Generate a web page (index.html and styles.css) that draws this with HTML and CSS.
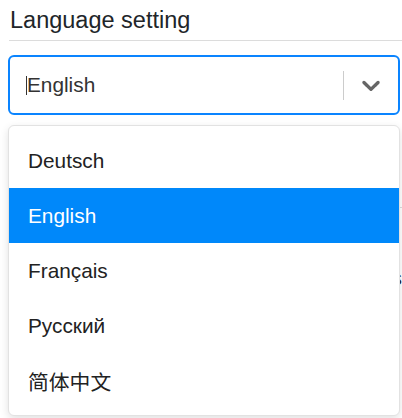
FILE: index.html
```html
<!DOCTYPE html>
<html lang="en">
<head>
<meta charset="utf-8">
<title>Language setting</title>
<link rel="stylesheet" href="styles.css">
</head>
<body>
<div class="page">
  <h2 class="heading">Language setting</h2>
  <div class="rule"></div>
  <div class="select">
    <div class="control">
      <div class="value"><span class="caret"></span>English</div>
      <div class="indicators">
        <span class="separator"></span>
        <span class="dropdown">
          <svg viewBox="0 0 20 20" width="30" height="30" aria-hidden="true"><path d="M4.516 7.548c0.436-0.446 1.043-0.481 1.576 0l3.908 3.747 3.908-3.747c0.533-0.481 1.141-0.446 1.574 0 0.436 0.445 0.408 1.197 0 1.615-0.406 0.418-4.695 4.502-4.695 4.502-0.217 0.223-0.502 0.335-0.787 0.335s-0.57-0.112-0.789-0.335c0 0-4.287-4.084-4.695-4.502s-0.436-1.17 0-1.615z"/></svg>
        </span>
      </div>
    </div>
    <div class="menu">
      <div class="option">Deutsch</div>
      <div class="option active">English</div>
      <div class="option">Français</div>
      <div class="option">Русский</div>
      <div class="option">简体中文</div>
    </div>
  </div>
  <div class="behind">
    <div class="rule"></div>
    <div class="behind-row">Time format: 24 hours</div>
  </div>
</div>
</body>
</html>
```

FILE: styles.css
```css
html, body {
  margin: 0;
  padding: 0;
  background: #ffffff;
  overflow: hidden;
}
body {
  width: 402px;
  height: 418px;
  font-family: "Liberation Sans", Arial, "Noto Sans CJK SC", sans-serif;
  color: #212529;
}
.page {
  width: 394px;
  padding-left: 8px;
}
.heading {
  margin: 6px 0 0 2px;
  font-size: 23.5px;
  line-height: 28px;
  font-weight: 400;
  color: #212529;
}
.rule {
  margin: 6px 0 0 1px;
  height: 0;
  border-top: 1px solid #dcdcdc;
}
.select {
  position: relative;
  width: 392px;
  margin-top: 14px;
}
.control {
  box-sizing: border-box;
  height: 60px;
  display: flex;
  align-items: center;
  border: 2px solid #0a84ff;
  border-radius: 6px;
  background: #fff;
}
.value {
  flex: 1;
  padding-left: 16px;
  font-size: 20.8px;
  color: #333;
  display: flex;
  align-items: center;
}
.caret {
  display: inline-block;
  width: 1px;
  height: 19px;
  background: #333;
}
.indicators {
  display: flex;
  align-items: center;
  align-self: stretch;
}
.separator {
  width: 1.3px;
  height: 29px;
  background: #cccccc;
}
.dropdown {
  display: flex;
  align-items: center;
  padding: 0 12px;
  color: #666;
}
.dropdown svg {
  display: block;
  fill: #666;
}
.menu {
  position: absolute;
  left: 0;
  right: 0;
  top: 70px;
  z-index: 2;
  background: #fff;
  border: 1px solid #e2e2e2;
  border-radius: 6px;
  padding: 7px 0;
  box-shadow: 0 3px 8px rgba(0, 0, 0, 0.12);
}
.option {
  height: 55px;
  display: flex;
  align-items: center;
  padding-left: 19px;
  font-size: 20.8px;
  color: #222;
}
.option.active {
  background: #0088fa;
  color: #fff;
}
.behind {
  margin-top: 92px;
}
.behind-row {
  margin-top: 58px;
  text-align: right;
  font-size: 20.8px;
  color: #222;
}
```
